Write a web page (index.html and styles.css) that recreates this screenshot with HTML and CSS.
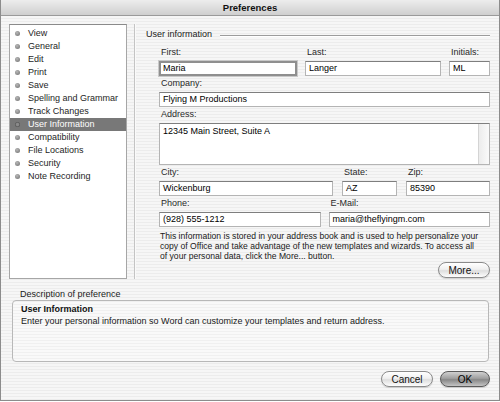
FILE: index.html
```html
<!DOCTYPE html>
<html>
<head>
<meta charset="utf-8">
<link rel="stylesheet" href="styles.css">
</head>
<body>
<div class="window">
  <div class="titlebar">Preferences</div>
  <div class="content">
    <div class="sidebar">
      <ul class="list">
        <li><span class="dot"></span>View</li>
        <li><span class="dot"></span>General</li>
        <li><span class="dot"></span>Edit</li>
        <li><span class="dot"></span>Print</li>
        <li><span class="dot"></span>Save</li>
        <li><span class="dot"></span>Spelling and Grammar</li>
        <li><span class="dot"></span>Track Changes</li>
        <li class="sel"><span class="dot"></span>User Information</li>
        <li><span class="dot"></span>Compatibility</li>
        <li><span class="dot"></span>File Locations</li>
        <li><span class="dot"></span>Security</li>
        <li><span class="dot"></span>Note Recording</li>
      </ul>
    </div>
    <div class="divider"></div>
    <div class="main">
      <div class="group-head"><span>User information</span><span class="rule"></span></div>
      <div class="form">
        <div class="row r1">
          <div class="field"><div class="lbl">First:</div><div class="inp focus">Maria</div></div>
          <div class="field"><div class="lbl">Last:</div><div class="inp">Langer</div></div>
          <div class="field"><div class="lbl">Initials:</div><div class="inp">ML</div></div>
        </div>
        <div class="row">
          <div class="field"><div class="lbl">Company:</div><div class="inp">Flying M Productions</div></div>
        </div>
        <div class="row">
          <div class="field"><div class="lbl">Address:</div><div class="inp area"><span>12345 Main Street, Suite A</span><span class="scroll"></span></div></div>
        </div>
        <div class="row r3">
          <div class="field"><div class="lbl">City:</div><div class="inp">Wickenburg</div></div>
          <div class="field"><div class="lbl">State:</div><div class="inp">AZ</div></div>
          <div class="field"><div class="lbl">Zip:</div><div class="inp">85390</div></div>
        </div>
        <div class="row r4">
          <div class="field"><div class="lbl">Phone:</div><div class="inp">(928) 555-1212</div></div>
          <div class="field"><div class="lbl">E-Mail:</div><div class="inp">maria@theflyingm.com</div></div>
        </div>
        <p class="info">This information is stored in your address book and is used to help personalize your copy of Office and take advantage of the new templates and wizards. To access all<br>of your personal data, click the More... button.</p>
        <div class="more-row"><button class="btn">More...</button></div>
      </div>
    </div>
  </div>
  <div class="desc">
    <div class="desc-lbl">Description of preference</div>
    <div class="desc-box">
      <div class="desc-title">User Information</div>
      <div class="desc-text">Enter your personal information so Word can customize your templates and return address.</div>
    </div>
  </div>
  <div class="buttons">
    <button class="btn cancel">Cancel</button>
    <button class="btn ok">OK</button>
  </div>
</div>
</body>
</html>
```
FILE: styles.css
```css
html, body {
  margin: 0;
  padding: 0;
}
body {
  width: 500px;
  height: 402px;
  overflow: hidden;
  font-family: "Liberation Sans", Arial, sans-serif;
  font-size: 9px;
  color: #1a1a1a;
  background: #fff;
}
.window {
  box-sizing: border-box;
  width: 500px;
  height: 401px;
  border: 1px solid #8c8c8c;
  border-top: none;
  display: flex;
  flex-direction: column;
  background: repeating-linear-gradient(to bottom, #ececec 0, #ececec 1px, #f6f6f6 1px, #f6f6f6 3px);
}
.titlebar {
  height: 15px;
  line-height: 15px;
  text-align: center;
  font-weight: bold;
  font-size: 9.5px;
  color: #111;
  background: linear-gradient(to bottom, #ededed, #cfcfcf);
  border-bottom: 1px solid #9a9a9a;
  flex: none;
}
.content {
  display: flex;
  height: 264px;
  flex: none;
}
.sidebar {
  margin: 8px 0 0 8px;
  width: 118px;
  height: 255px;
  box-sizing: border-box;
  background: #fff;
  border: 1px solid #a6a6a6;
  border-top-color: #8a8a8a;
  flex: none;
}
.list {
  list-style: none;
  margin: 0;
  padding: 2px 0 0 0;
}
.list li {
  height: 13px;
  line-height: 13px;
  display: flex;
  align-items: center;
  padding-left: 5px;
  font-size: 9px;
  color: #1e1e1e;
}
.list li.sel {
  background: #787878;
  color: #fff;
}
.dot {
  width: 5px;
  height: 5px;
  border-radius: 50%;
  background: radial-gradient(circle at 40% 35%, #b8b8b8, #6e6e6e);
  margin-right: 8px;
  flex: none;
}
.sel .dot {
  background: radial-gradient(circle, #8a8a8a 35%, #4e4e4e 70%);
}
.divider {
  width: 1px;
  height: 255px;
  margin: 8px 0 0 7px;
  background: #c4c4c4;
  border-right: 1px solid #fafafa;
  flex: none;
}
.main {
  flex: 1;
  padding: 12px 9px 0 10px;
}
.group-head {
  display: flex;
  align-items: center;
  height: 12px;
  line-height: 12px;
  font-size: 9px;
}
.group-head .rule {
  flex: 1;
  height: 1px;
  background: #9c9c9c;
  border-bottom: 1px solid #fff;
  margin-left: 8px;
  margin-top: 3px;
}
.form {
  margin-left: 13px;
  margin-top: 6px;
}
.row {
  display: flex;
  gap: 8px;
  margin-bottom: 1px;
}
.field {
  flex: 1;
  display: flex;
  flex-direction: column;
}
.r1 .field:nth-child(1) { flex: 0 0 138px; }
.r1 .field:nth-child(2) { flex: 0 0 136px; }
.r1 .field:nth-child(3) { flex: 1; }
.r3 { gap: 9px; }
.r3 .field:nth-child(1) { flex: 0 0 174px; }
.r3 .field:nth-child(2) { flex: 0 0 55px; }
.r3 .field:nth-child(3) { flex: 1; }
.lbl {
  height: 12px;
  line-height: 12px;
  padding-left: 2px;
  color: #2a2a2a;
}
.inp {
  margin-top: 3px;
  height: 15px;
  box-sizing: border-box;
  background: #fff;
  border: 1px solid #b4b4b4;
  border-top-color: #7e7e7e;
  line-height: 13px;
  padding-left: 3px;
  color: #000;
  white-space: nowrap;
  overflow: hidden;
}
.inp.focus {
  border: 2px solid #8f8f8f;
  box-shadow: 0 0 0 1px #c9c9c9;
  line-height: 11px;
  padding-left: 2px;
}
.inp.area {
  height: 42px;
  position: relative;
  padding-top: 1px;
}
.scroll {
  position: absolute;
  top: 0;
  right: 0;
  bottom: 0;
  width: 10px;
  border-left: 1px solid #d4d4d4;
  background: linear-gradient(to right, #ececec, #fafafa);
}
.info {
  margin: 4px 0 0 0;
  line-height: 10px;
  font-size: 8.6px;
  padding-left: 1px;
}
.more-row {
  display: flex;
  justify-content: flex-end;
  margin-top: 1px;
}
.btn {
  font-family: "Liberation Sans", Arial, sans-serif;
  font-size: 10px;
  height: 16px;
  padding: 0;
  border-radius: 8px;
  border: 1px solid #8a8a8a;
  background: linear-gradient(to bottom, #ffffff 0%, #f0f0f0 45%, #dedede 55%, #fdfdfd 100%);
  color: #111;
  box-shadow: 0 1px 1px rgba(0,0,0,0.15);
}
.more-row .btn { width: 52px; }
.desc {
  padding: 8px 10px 0 11px;
  flex: none;
}
.desc-lbl {
  padding-left: 8px;
  height: 12px;
  line-height: 12px;
}
.desc-box {
  margin-top: 0;
  height: 62px;
  box-sizing: border-box;
  border: 1px solid #b8b8b8;
  border-radius: 4px;
  background: repeating-linear-gradient(to bottom, #f0f0f0 0, #f0f0f0 1px, #f9f9f9 1px, #f9f9f9 3px);
  padding: 3px 8px;
}
.desc-title {
  font-weight: bold;
  line-height: 11px;
  color: #111;
}
.desc-text {
  line-height: 12px;
}
.buttons {
  display: flex;
  justify-content: flex-end;
  gap: 7px;
  padding: 9px 9px 0 0;
}
.buttons .cancel { width: 52px; }
.buttons .ok {
  width: 50px;
  border-color: #5a5a5a;
  background: linear-gradient(to bottom, #d0d0d0 0%, #a0a0a0 45%, #888888 55%, #c4c4c4 100%);
  color: #000;
}
```
